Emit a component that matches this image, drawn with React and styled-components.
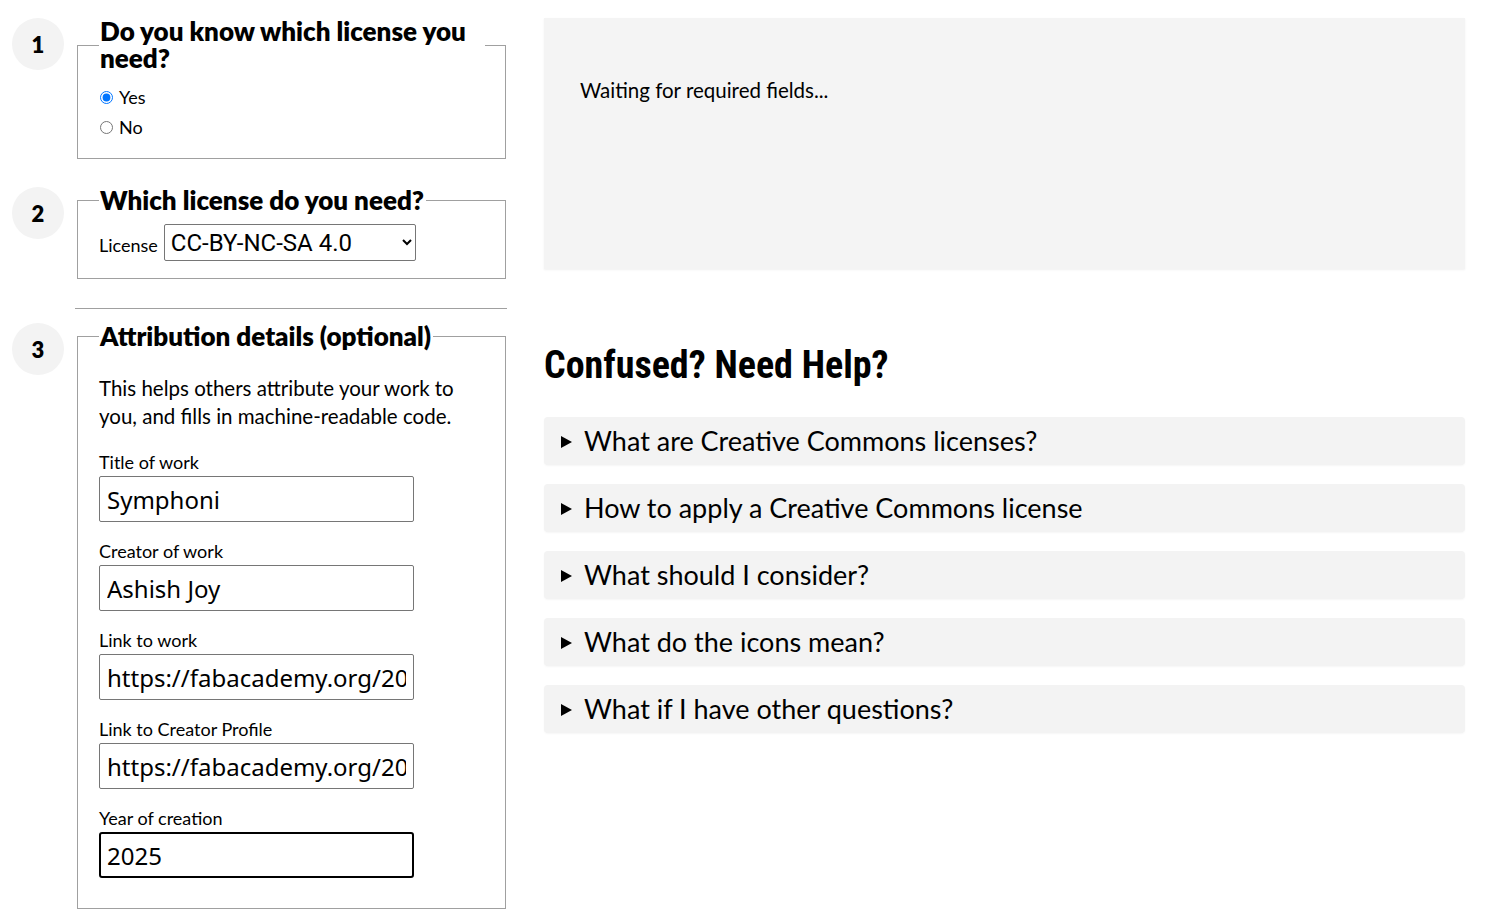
import React from "react";
import styled, { createGlobalStyle } from "styled-components";

const GlobalStyle = createGlobalStyle`
  body {
    margin: 0;
    background: #ffffff;
    color: #000000;
    font-family: Lato, "Liberation Sans", sans-serif;
  }
`;

const Page = styled.div`
  display: flex;
  align-items: flex-start;
  gap: 37px;
  padding: 18px 23px 0 12px;
`;

const LeftColumn = styled.div`
  width: 495px;
  flex-shrink: 0;
  display: flex;
  flex-direction: column;
`;

const Step = styled.div`
  display: flex;
  align-items: flex-start;
  gap: 13px;
  margin-top: ${(p) => p.$top || 0}px;
`;

const StepNumber = styled.div`
  width: 52px;
  height: 52px;
  border-radius: 50%;
  background: #f3f3f3;
  flex-shrink: 0;
  display: flex;
  align-items: center;
  justify-content: center;
  font-size: 22px;
  font-weight: 800;
`;

const Fieldset = styled.fieldset`
  width: 429px;
  box-sizing: border-box;
  margin: 0;
  border: 1px solid #a0a0a0;
  padding: 0 20px ${(p) => p.$bottom || 20}px 21px;
`;

const Legend = styled.legend`
  padding: 0 2px 0 1px;
  font-size: 26px;
  font-weight: 800;
  line-height: 27px;
  max-width: 385px;
`;

const RadioRow = styled.label`
  display: flex;
  align-items: center;
  gap: 6px;
  font-size: 18px;
  height: 30px;
  input {
    margin: 0 0 0 1px;
    width: 13px;
    height: 13px;
  }
`;

const RadioGroup = styled.div`
  display: flex;
  flex-direction: column;
  padding-top: 10px;
`;

const InlineField = styled.div`
  display: flex;
  align-items: flex-end;
  gap: 6px;
  padding-top: 10px;
  font-size: 18px;
`;

const LabelText = styled.span`
  padding-bottom: 5px;
`;

const Select = styled.select`
  width: 252px;
  height: 37px;
  font-family: Roboto, "Liberation Sans", sans-serif;
  font-size: 24px;
  border: 1px solid #767676;
  border-radius: 2px;
  background: #ffffff;
  color: #000000;
  padding: 0 2px;
`;

const Rule = styled.hr`
  margin: 29px 0 14px 63px;
  width: 432px;
  border: none;
  border-top: 1px solid #a0a0a0;
`;

const Description = styled.p`
  margin: 24px 0 0;
  font-size: 20.5px;
  line-height: 28px;
`;

const Field = styled.div`
  display: flex;
  flex-direction: column;
  margin-top: ${(p) => p.$top || 19}px;
`;

const FieldLabel = styled.label`
  font-size: 18px;
  line-height: 20px;
  margin-bottom: 4px;
`;

const TextInput = styled.input`
  width: 315px;
  height: 46px;
  box-sizing: border-box;
  font-family: "Noto Sans", "Open Sans", sans-serif;
  font-size: 24px;
  color: #000000;
  border: ${(p) => (p.$focused ? "2px solid #000000" : "1px solid #767676")};
  padding: 0 ${(p) => (p.$focused ? 6 : 7)}px;
  border-radius: ${(p) => (p.$focused ? 3 : 2)}px;
  outline: none;
  background: #ffffff;
`;

const RightColumn = styled.div`
  flex: 1;
  display: flex;
  flex-direction: column;
`;

const StatusBox = styled.div`
  height: 251px;
  box-sizing: border-box;
  background: #f4f4f4;
  padding: 60px 36px;
  font-size: 20.5px;
  box-shadow: 0 1px 2px rgba(0, 0, 0, 0.06);
`;

const HelpTitle = styled.h2`
  margin: 74px 0 30px;
  font-family: "Roboto Condensed", "Liberation Sans Narrow", Roboto, sans-serif;
  font-size: 38px;
  font-weight: 700;
  line-height: 44px;
`;

const HelpList = styled.div`
  display: flex;
  flex-direction: column;
  gap: 19px;
`;

const HelpItem = styled.details`
  background: #f3f3f3;
  border-radius: 4px;
  box-shadow: 0 1px 2px rgba(0, 0, 0, 0.04);
`;

const HelpSummary = styled.summary`
  height: 47px;
  padding-bottom: 1px;
  display: flex;
  align-items: center;
  gap: 12px;
  padding-left: 17px;
  font-size: 27px;
  cursor: pointer;
  list-style: none;
  &::-webkit-details-marker {
    display: none;
  }
`;

const Triangle = styled.span`
  width: 0;
  height: 0;
  margin-top: 2px;
  border-top: 6px solid transparent;
  border-bottom: 6px solid transparent;
  border-left: 11px solid #000000;
`;

const questions = [
  "What are Creative Commons licenses?",
  "How to apply a Creative Commons license",
  "What should I consider?",
  "What do the icons mean?",
  "What if I have other questions?",
];

const fields = [
  { label: "Title of work", value: "Symphoni" },
  { label: "Creator of work", value: "Ashish Joy" },
  { label: "Link to work", value: "https://fabacademy.org/2025/labs/kochi/students/ashish-joy/" },
  { label: "Link to Creator Profile", value: "https://fabacademy.org/2025/labs/kochi/students/ashish-joy/" },
  { label: "Year of creation", value: "2025", focused: true },
];

const App = () => {
  return (
    <Page>
      <GlobalStyle />
      <LeftColumn>
        <Step>
          <StepNumber>1</StepNumber>
          <Fieldset $bottom={16}>
            <Legend>Do you know which license you need?</Legend>
            <RadioGroup>
              <RadioRow>
                <input type="radio" name="know" defaultChecked />
                Yes
              </RadioRow>
              <RadioRow>
                <input type="radio" name="know" />
                No
              </RadioRow>
            </RadioGroup>
          </Fieldset>
        </Step>

        <Step $top={28}>
          <StepNumber>2</StepNumber>
          <Fieldset $bottom={17}>
            <Legend>Which license do you need?</Legend>
            <InlineField>
              <LabelText>License</LabelText>
              <Select defaultValue="CC-BY-NC-SA 4.0">
                <option>CC0 1.0</option>
                <option>CC-BY 4.0</option>
                <option>CC-BY-SA 4.0</option>
                <option>CC-BY-NC 4.0</option>
                <option>CC-BY-NC-SA 4.0</option>
                <option>CC-BY-ND 4.0</option>
                <option>CC-BY-NC-ND 4.0</option>
              </Select>
            </InlineField>
          </Fieldset>
        </Step>

        <Rule />

        <Step>
          <StepNumber>3</StepNumber>
          <Fieldset $bottom={30}>
            <Legend>Attribution details (optional)</Legend>
            <Description>
              This helps others attribute your work to you, and fills in machine-readable code.
            </Description>
            {fields.map((f, i) => (
              <Field key={f.label} $top={i === 0 ? 22 : 19}>
                <FieldLabel>{f.label}</FieldLabel>
                <TextInput type="text" defaultValue={f.value} $focused={f.focused} />
              </Field>
            ))}
          </Fieldset>
        </Step>
      </LeftColumn>

      <RightColumn>
        <StatusBox>Waiting for required fields...</StatusBox>
        <HelpTitle>Confused? Need Help?</HelpTitle>
        <HelpList>
          {questions.map((q) => (
            <HelpItem key={q}>
              <HelpSummary>
                <Triangle />
                {q}
              </HelpSummary>
            </HelpItem>
          ))}
        </HelpList>
      </RightColumn>
    </Page>
  );
};

export default App;
